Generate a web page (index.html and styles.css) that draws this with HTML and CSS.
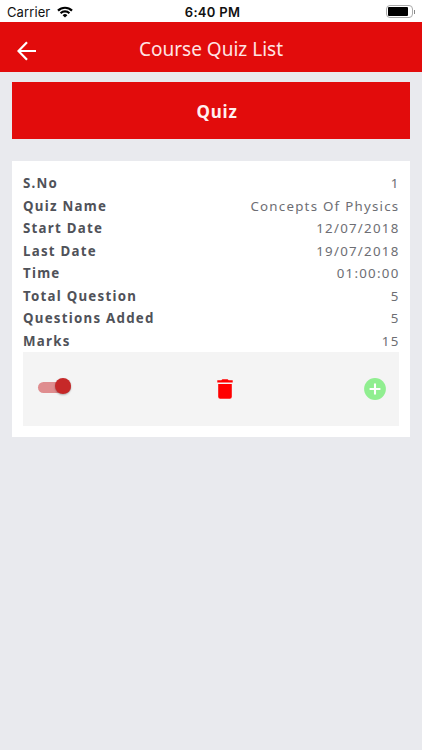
FILE: index.html
```
<!DOCTYPE html>
<html lang="en">
<head>
    <meta charset="UTF-8">
    <meta name="viewport" content="width=device-width, initial-scale=1.0">
    <title>Course Quiz List</title>
    <link rel="stylesheet" href="styles.css">
</head>
<body>
    <div class="status-bar">
        <div class="carrier">
            <span>Carrier</span>
            <svg class="wifi" width="16" height="12" viewBox="0 0 16 12">
                <path d="M1 4.6a10 10 0 0 1 14 0M3.6 7.2a6.3 6.3 0 0 1 8.8 0" fill="none" stroke="#000" stroke-width="2.2"/>
                <path d="M8 11.6L5.6 9.2a3.4 3.4 0 0 1 4.8 0z"/>
            </svg>
        </div>
        <div class="clock">6:40 PM</div>
        <div class="battery">
            <div class="battery-body"><div class="battery-level"></div></div>
            <div class="battery-tip"></div>
        </div>
    </div>

    <header class="header">
        <a class="back">
            <svg width="20" height="20" viewBox="0 0 20 20">
                <path d="M19 10H2M10 1.2L1.5 10L10 18.8" fill="none" stroke="#fff" stroke-width="2.2"/>
            </svg>
        </a>
        <h1>Course Quiz List</h1>
    </header>

    <main class="content">
        <button class="quiz-button">Quiz</button>

        <div class="card">
            <div class="row"><b>S.No</b><span>1</span></div>
            <div class="row"><b>Quiz Name</b><span>Concepts Of Physics</span></div>
            <div class="row"><b>Start Date</b><span>12/07/2018</span></div>
            <div class="row"><b>Last Date</b><span>19/07/2018</span></div>
            <div class="row"><b>Time</b><span>01:00:00</span></div>
            <div class="row"><b>Total Question</b><span>5</span></div>
            <div class="row"><b>Questions Added</b><span>5</span></div>
            <div class="row"><b>Marks</b><span>15</span></div>

            <div class="actions">
                <div class="toggle"><div class="knob"></div></div>
                <svg class="trash" width="16" height="20" viewBox="0 0 16 20">
                    <path d="M1.2 5h13.6v12.8a2 2 0 0 1-2 2H3.2a2 2 0 0 1-2-2zM.3 1.3h4L5.4.2h5.2l1.1 1.1h4v2.2H.3z" fill="#f00"/>
                </svg>
                <svg class="add" width="22" height="22" viewBox="0 0 22 22">
                    <circle cx="11" cy="11" r="10.9" fill="#90ee90"/>
                    <path d="M11 5.6v10.8M5.6 11h10.8" stroke="#fff" stroke-width="2.1"/>
                </svg>
            </div>
        </div>
    </main>
</body>
</html>
```

FILE: styles.css
```
* {
    box-sizing: border-box;
}
body {
    margin: 0;
    min-height: 100vh;
    background-color: #e9eaee;
    font-family: 'Noto Sans', 'Open Sans', sans-serif;
}
.status-bar {
    display: grid;
    grid-template-columns: 1fr auto 1fr;
    align-items: center;
    height: 22px;
    padding: 1px 7px 0 7px;
    background-color: white;
    font-family: Inter, 'Liberation Sans', sans-serif;
    font-size: 13px;
    color: #111;
}
.carrier {
    display: flex;
    align-items: center;
    gap: 7px;
    letter-spacing: 0.1px;
}
.clock {
    margin-left: 3px;
    font-weight: 600;
    letter-spacing: 0.3px;
}
.battery {
    display: flex;
    align-items: center;
    justify-content: flex-end;
    gap: 1px;
}
.battery-body {
    width: 27px;
    height: 13px;
    padding: 1px;
    border: 1px solid #aaa;
    border-radius: 4px;
}
.battery-level {
    width: 20px;
    height: 9px;
    border-radius: 1px;
    background-color: black;
}
.battery-tip {
    width: 1px;
    height: 4px;
    background-color: #888;
}
.header {
    display: grid;
    grid-template-columns: 60px 1fr 60px;
    align-items: center;
    height: 50px;
    background-color: #e20c0c;
    color: white;
}
.back {
    display: flex;
    padding: 8px 0 0 17px;
}
.header h1 {
    margin: 3px 0 0 0;
    font-size: 19px;
    font-weight: 400;
    text-align: center;
    color: #ffe4e4;
}
.content {
    padding: 10px 12px;
}
.quiz-button {
    display: block;
    width: 100%;
    height: 57px;
    padding: 2px 0 0 12px;
    border: none;
    background-color: #e20c0c;
    color: #fff0f0;
    font-family: inherit;
    font-size: 17px;
    font-weight: 700;
    letter-spacing: 0.8px;
}
.card {
    margin-top: 22px;
    height: 276px;
    padding: 11px;
    background-color: white;
}
.row {
    display: flex;
    justify-content: space-between;
    height: 22.5px;
    line-height: 22.5px;
    font-size: 13.3px;
    letter-spacing: 1.25px;
    color: #6d6e73;
}
.row span {
    margin-right: -0.5px;
}
.row b {
    color: #505259;
}
.actions {
    display: flex;
    justify-content: space-between;
    align-items: center;
    height: 74px;
    padding: 0 13px 0 14.5px;
    background-color: #f4f4f4;
}
.trash {
    margin-left: 15px;
}
.toggle {
    display: flex;
    align-items: center;
    justify-content: flex-end;
    width: 33px;
    height: 11px;
    margin-top: -4px;
    border-radius: 6px;
    background-color: #df8d8f;
}
.knob {
    flex: none;
    width: 16px;
    height: 16px;
    margin-top: -2px;
    border-radius: 50%;
    background-color: #c62828;
    box-shadow: 0 1px 2px rgba(0, 0, 0, 0.3);
}
```
